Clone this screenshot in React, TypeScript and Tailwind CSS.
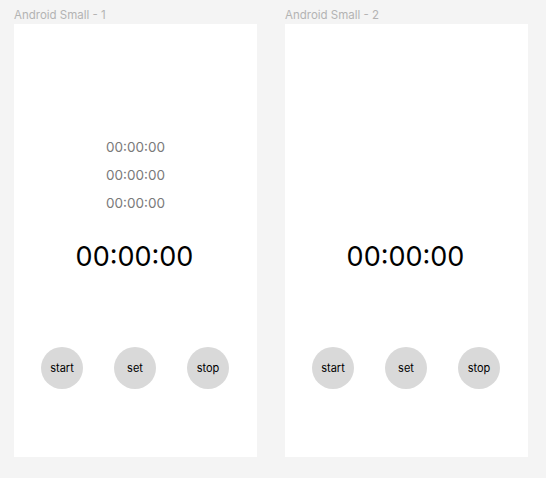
import React from 'react';

function Controls() {
  return (
    <div className="flex gap-[31px] px-[27px]">
      {['start', 'set', 'stop'].map((label) => (
        <button
          key={label}
          className="w-[42px] h-[42px] rounded-full bg-[#d9d9d9] flex items-center justify-center text-[11px] text-black"
        >
          {label}
        </button>
      ))}
    </div>
  );
}

function Frame({ title, laps }: { title: string; laps: boolean }) {
  return (
    <div className="flex flex-col w-[243px]">
      <div className="h-[24px] pt-[8px] text-[11.5px] leading-[14px] text-[#b3b3b3]">{title}</div>
      <div className={`bg-white h-[433px] flex flex-col items-center ${laps ? 'pt-[109px]' : 'pt-[217px]'}`}>
        {laps && (
          <div className="flex flex-col items-center mb-[24px]">
            {[0, 1, 2].map((i) => (
              <div key={i} className="text-[13.5px] leading-[28px] text-[#7a7a7a]">
                00:00:00
              </div>
            ))}
          </div>
        )}
        <div className="text-[27px] leading-[32px] text-black -translate-x-px">00:00:00</div>
        <div className="mt-[74px] self-stretch">
          <Controls />
        </div>
      </div>
    </div>
  );
}

export default function App() {
  return (
    <div
      className="w-[546px] h-[478px] bg-[#f4f4f4] flex gap-[28px] pl-[14px]"
      style={{ fontFamily: 'Inter, "Noto Sans", sans-serif' }}
    >
      <Frame title="Android Small - 1" laps />
      <Frame title="Android Small - 2" laps={false} />
    </div>
  );
}
